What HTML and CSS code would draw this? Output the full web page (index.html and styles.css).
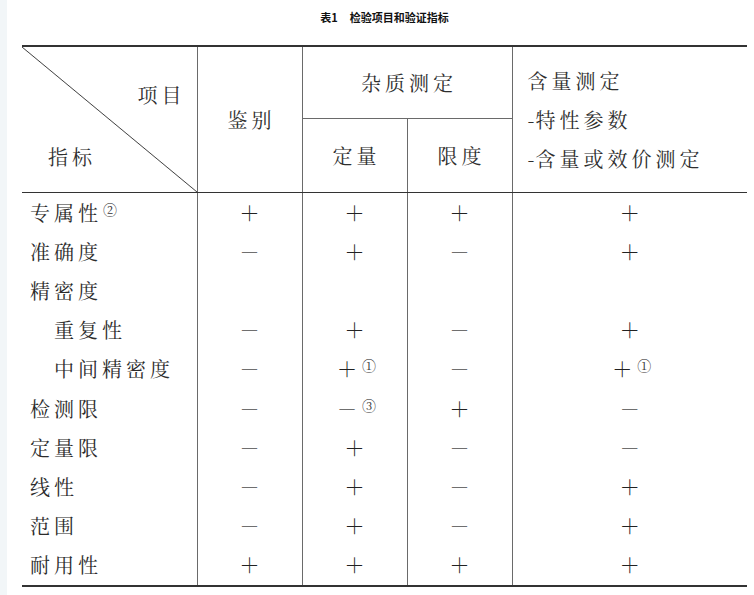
FILE: index.html
```html
<!DOCTYPE html>
<html lang="zh-CN">
<head>
<meta charset="utf-8">
<title>表1 检验项目和验证指标</title>
<link rel="stylesheet" href="styles.css">
</head>
<body>
<div class="page">
  <div class="title"><span class="no">表1</span>检验项目和验证指标</div>
  <table class="spec">
    <colgroup>
      <col class="c0"><col class="c1"><col class="c2"><col class="c3"><col class="c4">
    </colgroup>
    <thead>
      <tr class="hr1">
        <th rowspan="2" class="diag">
          <div class="diag-in">
            <div class="item">项目</div>
            <div class="index">指标</div>
          </div>
        </th>
        <th rowspan="2" class="ctr">鉴别</th>
        <th colspan="2" class="ctr sub">杂质测定</th>
        <th rowspan="2" class="assay">含量测定<br><span class="dash">-</span>特性参数<br><span class="dash">-</span>含量或效价测定</th>
      </tr>
      <tr class="hr2">
        <th class="ctr">定量</th>
        <th class="ctr">限度</th>
      </tr>
    </thead>
    <tbody>
      <tr><td class="name">专属性<sup>②</sup></td><td>＋</td><td>＋</td><td>＋</td><td>＋</td></tr>
      <tr><td class="name">准确度</td><td class="m">－</td><td>＋</td><td class="m">－</td><td>＋</td></tr>
      <tr><td class="name">精密度</td><td></td><td></td><td></td><td></td></tr>
      <tr><td class="name ind">重复性</td><td class="m">－</td><td>＋</td><td class="m">－</td><td>＋</td></tr>
      <tr><td class="name ind">中间精密度</td><td class="m">－</td><td>＋<sup>①</sup></td><td class="m">－</td><td>＋<sup>①</sup></td></tr>
      <tr><td class="name">检测限</td><td class="m">－</td><td class="m">－<sup>③</sup></td><td>＋</td><td class="m">－</td></tr>
      <tr><td class="name">定量限</td><td class="m">－</td><td>＋</td><td class="m">－</td><td class="m">－</td></tr>
      <tr><td class="name">线性</td><td class="m">－</td><td>＋</td><td class="m">－</td><td>＋</td></tr>
      <tr><td class="name">范围</td><td class="m">－</td><td>＋</td><td class="m">－</td><td>＋</td></tr>
      <tr><td class="name">耐用性</td><td>＋</td><td>＋</td><td>＋</td><td>＋</td></tr>
    </tbody>
  </table>
</div>
</body>
</html>
```
FILE: styles.css
```css
html, body {
  margin: 0;
  padding: 0;
  background: #ffffff;
}
.page {
  border-left: 7px solid #f2f6f8;
  min-height: 595px;
  box-sizing: border-box;
  padding: 10px 0 0 15px;
  font-family: "Noto Serif CJK SC", "Noto Sans CJK SC", serif;
  color: #2b2b2b;
}
.title {
  width: 725px;
  text-align: center;
  font-family: "Noto Sans CJK SC", sans-serif;
  font-size: 11px;
  font-weight: 700;
  line-height: 14px;
  height: 14px;
  padding-left: 0;
  box-sizing: border-box;
  color: #111;
  margin-bottom: 21px;
}
.title .no {
  margin-right: 12px;
}
.spec {
  border-collapse: collapse;
  table-layout: fixed;
  width: 725px;
  font-size: 20px;
  font-weight: 400;
  letter-spacing: 4px;
  border-top: 2px solid #333;
  border-bottom: 2px solid #333;
}
.c0 { width: 175px; }
.c1 { width: 105px; }
.c2 { width: 105px; }
.c3 { width: 105px; }
.c4 { width: 235px; }
.spec th {
  font-weight: 400;
  padding: 0;
  border-left: 1px solid #6a6a6a;
  border-bottom: 1px solid #6a6a6a;
  color: #2e2e2e;
}
.spec th.diag {
  border-left: none;
  border-bottom: 1px solid #333;
  background: linear-gradient(to top right, transparent calc(50% - 0.8px), #444 50%, transparent calc(50% + 0.8px));
  text-align: left;
  vertical-align: top;
}
.diag-in {
  height: 145px;
  padding-top: 36px;
  box-sizing: border-box;
  line-height: 24px;
}
.item {
  text-align: right;
  padding-right: 11px;
}
.index {
  margin-top: 38px;
  padding-left: 26px;
}
.hr1 { height: 72px; }
.hr2 { height: 73px; }
.spec thead tr:last-child th,
.spec th[rowspan] {
  border-bottom: 1px solid #333;
}
.spec th.sub {
  border-bottom: 1px solid #6a6a6a;
}
.ctr {
  text-align: center;
  padding-left: 4px !important;
}
.assay {
  text-align: left;
  line-height: 39px;
  padding-left: 15px !important;
  padding-top: 0;
  vertical-align: middle;
}
.dash {
  letter-spacing: 1px;
}
.spec td {
  height: 39.2px;
  padding: 0 0 0 4px;
  text-align: center;
  line-height: 24px;
  border-left: 1px solid #6a6a6a;
  color: #222;
}
.spec td.name {
  border-left: none;
  text-align: left;
  padding-left: 8px;
  color: #2b2b2b;
}
.spec td.ind {
  padding-left: 32px;
}
.spec td.m {
  color: #6f6f6f;
}
.spec sup {
  font-size: 14px;
  letter-spacing: 0;
  vertical-align: top;
  position: relative;
  top: -4px;
  color: #333;
  margin-left: 1px;
}
```
